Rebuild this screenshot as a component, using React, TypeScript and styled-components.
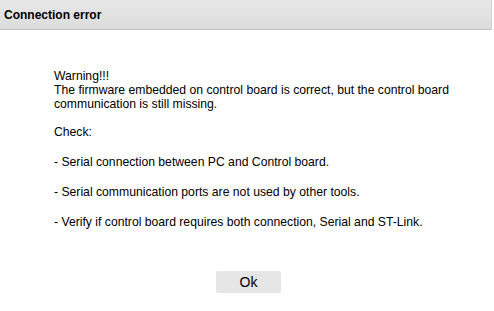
import React from "react";
import styled, { createGlobalStyle } from "styled-components";

const Global = createGlobalStyle`
  html, body { margin: 0; padding: 0; background: #ffffff; }
  body { font-family: "Liberation Sans", Arial, sans-serif; }
`;

const Dialog = styled.div`
  width: 494px;
  height: 311px;
  display: flex;
  flex-direction: column;
  background: #ffffff;
`;

const TitleBar = styled.div`
  height: 30px;
  box-sizing: border-box;
  display: flex;
  align-items: center;
  padding-left: 4px;
  margin-right: 2px;
  background: linear-gradient(#e8e8e8, #dcdcdc);
  border-bottom: 1px solid #c4c4c4;
  border-right: 1px solid #d0d0d0;
  font-size: 12px;
  font-weight: bold;
  color: #000;
`;

const Body = styled.div`
  display: flex;
  flex-direction: column;
  padding: 39px 20px 0 54px;
`;

const Message = styled.div`
  font-size: 12.2px;
  line-height: 14px;
  color: #000;
`;

const Para = styled.p<{ $gap?: number }>`
  margin: 0 0 ${(p) => p.$gap ?? 16}px 0;
`;

const Footer = styled.div`
  display: flex;
  justify-content: center;
  padding-top: 42px;
  padding-left: 3px;
`;

const Button = styled.button`
  width: 65px;
  height: 22px;
  border: none;
  border-radius: 2px;
  background: #e6e6e6;
  font-family: "Liberation Sans", Arial, sans-serif;
  font-size: 14px;
  color: #000;
  padding: 0;
`;

export default function App() {
  return (
    <>
      <Global />
      <Dialog>
        <TitleBar>Connection error</TitleBar>
        <Body>
          <Message>
            <Para $gap={14}>
              Warning!!!
              <br />
              The firmware embedded on control board is correct, but the control board
              communication is still missing.
            </Para>
            <Para>Check:</Para>
            <Para>- Serial connection between PC and Control board.</Para>
            <Para>- Serial communication ports are not used by other tools.</Para>
            <Para $gap={0}>- Verify if control board requires both connection, Serial and ST-Link.</Para>
          </Message>
        </Body>
        <Footer>
          <Button>Ok</Button>
        </Footer>
      </Dialog>
    </>
  );
}
